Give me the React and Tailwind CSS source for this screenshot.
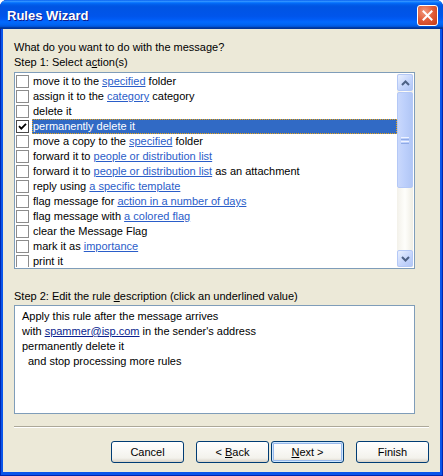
import React from 'react'

const ACTIONS = [
  ['move it to the ', { link: 'specified' }, ' folder'],
  ['assign it to the ', { link: 'category' }, ' category'],
  ['delete it'],
  ['permanently delete it'],
  ['move a copy to the ', { link: 'specified' }, ' folder'],
  ['forward it to ', { link: 'people or distribution list' }],
  ['forward it to ', { link: 'people or distribution list' }, ' as an attachment'],
  ['reply using ', { link: 'a specific template' }],
  ['flag message for ', { link: 'action in a number of days' }],
  ['flag message with ', { link: 'a colored flag' }],
  ['clear the Message Flag'],
  ['mark it as ', { link: 'importance' }],
  ['print it'],
]

const SELECTED = 3

function Check({ checked }) {
  return (
    <span
      className={
        'w-[13px] h-[13px] shrink-0 bg-white border flex items-center justify-center ' +
        (checked ? 'border-[#4a4a4a]' : 'border-[#8c8c8c]')
      }
    >
      {checked && (
        <svg width="9" height="9" viewBox="0 0 9 9">
          <path d="M1 4.2 L3.3 6.6 L8 1.8" stroke="#000" strokeWidth="1.8" fill="none" />
        </svg>
      )}
    </span>
  )
}

function Chevron({ up }) {
  return (
    <svg width="9" height="6" viewBox="0 0 9 6">
      <path
        d={up ? 'M1 5 L4.5 1.5 L8 5' : 'M1 1 L4.5 4.5 L8 1'}
        stroke="#4d6185"
        strokeWidth="2"
        fill="none"
      />
    </svg>
  )
}

function ScrollButton({ up }) {
  return (
    <div className="h-[17px] rounded-[2px] border border-[#b4c8f6] bg-[linear-gradient(135deg,#e9f0fe,#c6d6fc_55%,#b1c6f5)] flex items-center justify-center">
      <Chevron up={up} />
    </div>
  )
}

function Scrollbar() {
  return (
    <div className="w-[16px] h-full flex flex-col bg-[linear-gradient(90deg,#f3f1ea,#fefefb_50%,#efede4)]">
      <ScrollButton up />
      <div className="mt-[1px] h-[96px] rounded-[2px] border border-[#b4c8f6] bg-[linear-gradient(90deg,#c9d8fc,#bccffb_50%,#b1c6f5)] flex flex-col items-center justify-center gap-[1px]">
        <span className="w-[8px] h-[1px] bg-[#eef3fe]" />
        <span className="w-[8px] h-[1px] bg-[#8faae6]" />
        <span className="w-[8px] h-[1px] bg-[#eef3fe]" />
        <span className="w-[8px] h-[1px] bg-[#8faae6]" />
      </div>
      <div className="flex-1" />
      <ScrollButton />
    </div>
  )
}

function ActionRow({ parts, index }) {
  const selected = index === SELECTED
  return (
    <div className="h-[15px] flex items-center">
      <Check checked={selected} />
      <span
        className={
          'ml-[3px] px-[1px] h-[15px] whitespace-nowrap ' +
          (selected
            ? 'flex-1 bg-[#316ac5] text-white outline-1 outline-dotted outline-[#e8a317] -outline-offset-1'
            : '')
        }
      >
        {parts.map((p, i) =>
          typeof p === 'string' ? (
            <span key={i}>{p}</span>
          ) : (
            <span key={i} className="text-[#2a5dc9] underline underline-offset-[1px]">
              {p.link}
            </span>
          )
        )}
      </span>
    </div>
  )
}

function WizButton({ children, focused }) {
  return (
    <button
      className={
        'w-[73px] h-[22px] rounded-[3px] border border-[#003c74] bg-[linear-gradient(180deg,#ffffff,#f3f2ec_80%,#d8d2c6)] text-[11px] leading-[15px] text-black ' +
        (focused ? 'shadow-[inset_0_0_0_1px_#cee7ff,inset_0_0_0_2px_#98b8ea]' : '')
      }
    >
      {children}
    </button>
  )
}

export default function App() {
  return (
    <div className="w-[443px] h-[476px] flex flex-col rounded-t-[7px] overflow-hidden bg-[#0a55ea] shadow-[inset_1px_0_0_#0026b0,inset_-1px_0_0_#0026b0,inset_0_-1px_0_#0026b0] font-['Liberation_Sans',Arial,sans-serif]">
      {/* title bar */}
      <div className="h-[29px] shrink-0 flex items-start justify-between pl-[7px] pr-[5px] pt-[5px] bg-[linear-gradient(180deg,#0058ee_0%,#3593ff_4%,#288eff_6%,#127dff_8%,#036ffc_10%,#0262ee_14%,#0057e5_20%,#0054e3_24%,#0055eb_56%,#005bf5_66%,#026afe_76%,#0062ef_86%,#0052d6_92%,#0040ab_94%,#003092_100%)]">
        <span className="mt-[4px] text-[13px] leading-[13px] font-bold text-white [text-shadow:1px_1px_#0f1a89]">
          Rules Wizard
        </span>
        <div className="w-[21px] h-[21px] rounded-[3px] border border-white bg-[radial-gradient(circle_at_35%_30%,#f29a7e,#e05a36_50%,#c43a14)] flex items-center justify-center">
          <svg width="11" height="11" viewBox="0 0 11 11">
            <path d="M1.5 1.5 L9.5 9.5 M9.5 1.5 L1.5 9.5" stroke="#fff" strokeWidth="2" strokeLinecap="square" />
          </svg>
        </div>
      </div>

      {/* client area */}
      <div className="flex-1 flex px-[3px] pb-[4px]">
        <div className="flex-1 bg-[#ece9d8] px-[11px] pt-[11px] flex flex-col text-[11px] leading-[15px] text-black">
          <div className="h-[15px]">What do you want to do with the message?</div>
          <div className="h-[15px]">
            Step 1: Select a<span className="underline">c</span>tion(s)
          </div>

          <div className="mt-[2px] w-[401px] h-[197px] shrink-0 border border-[#7f9db9] bg-white p-[1px] flex">
            <div className="flex-1 overflow-hidden">
              {ACTIONS.map((parts, i) => (
                <ActionRow key={i} parts={parts} index={i} />
              ))}
            </div>
            <Scrollbar />
          </div>

          <div className="mt-[20px] h-[15px]">
            Step 2: Edit the rule <span className="underline">d</span>escription (click an underlined value)
          </div>
          <div className="mt-[1px] w-[401px] h-[109px] shrink-0 border border-[#7f9db9] bg-white px-[7px] pt-[3px]">
            <div className="h-[15px]">Apply this rule after the message arrives</div>
            <div className="h-[15px]">
              with <span className="text-[#0a1f8f] underline underline-offset-[1px]">spammer@isp.com</span> in the sender's address
            </div>
            <div className="h-[15px]">permanently delete it</div>
            <div className="h-[15px] pl-[6px]">and stop processing more rules</div>
          </div>

          <div className="mt-[12px] border-t border-t-[#aca899] border-b border-b-white" />

          <div className="mt-[13px] flex justify-end">
            <WizButton>Cancel</WizButton>
            <div className="w-[12px]" />
            <WizButton>
              &lt; <span className="underline">B</span>ack
            </WizButton>
            <div className="w-[2px]" />
            <WizButton focused>
              <span className="underline">N</span>ext &gt;
            </WizButton>
            <div className="w-[12px]" />
            <WizButton>Finish</WizButton>
          </div>
        </div>
      </div>
    </div>
  )
}
